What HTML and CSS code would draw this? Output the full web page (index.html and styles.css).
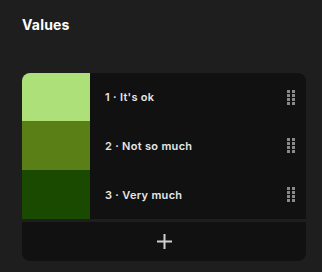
FILE: index.html
```html
<!DOCTYPE html>
<html lang="en">
<head>
    <meta charset="UTF-8">
    <title>Values</title>
    <link rel="stylesheet" href="styles.css">
</head>
<body>
    <h1 class="title">Values</h1>

    <div class="panel">
        <ul class="values">
            <li class="value">
                <span class="swatch swatch-1"></span>
                <span class="label">1 · It's ok</span>
                <svg class="handle" width="8" height="15" viewBox="0 0 8 15"><g fill="#8a8a8a"><rect x="0" y="0" width="3" height="3"/><rect x="5" y="0" width="3" height="3"/><rect x="0" y="4" width="3" height="3"/><rect x="5" y="4" width="3" height="3"/><rect x="0" y="8" width="3" height="3"/><rect x="5" y="8" width="3" height="3"/><rect x="0" y="12" width="3" height="3"/><rect x="5" y="12" width="3" height="3"/></g></svg>
            </li>
            <li class="value">
                <span class="swatch swatch-2"></span>
                <span class="label">2 · Not so much</span>
                <svg class="handle" width="8" height="15" viewBox="0 0 8 15"><g fill="#8a8a8a"><rect x="0" y="0" width="3" height="3"/><rect x="5" y="0" width="3" height="3"/><rect x="0" y="4" width="3" height="3"/><rect x="5" y="4" width="3" height="3"/><rect x="0" y="8" width="3" height="3"/><rect x="5" y="8" width="3" height="3"/><rect x="0" y="12" width="3" height="3"/><rect x="5" y="12" width="3" height="3"/></g></svg>
            </li>
            <li class="value">
                <span class="swatch swatch-3"></span>
                <span class="label">3 · Very much</span>
                <svg class="handle" width="8" height="15" viewBox="0 0 8 15"><g fill="#8a8a8a"><rect x="0" y="0" width="3" height="3"/><rect x="5" y="0" width="3" height="3"/><rect x="0" y="4" width="3" height="3"/><rect x="5" y="4" width="3" height="3"/><rect x="0" y="8" width="3" height="3"/><rect x="5" y="8" width="3" height="3"/><rect x="0" y="12" width="3" height="3"/><rect x="5" y="12" width="3" height="3"/></g></svg>
            </li>
        </ul>
        <button class="add" type="button">
            <svg width="15" height="15" viewBox="0 0 15 15"><path d="M7.5 0v15M0 7.5h15" stroke="#d0d0d0" stroke-width="2"/></svg>
        </button>
    </div>
</body>
</html>
```

FILE: styles.css
```css
body {
    margin: 0;
    padding: 17px 16px 0 22px;
    background-color: #1e1e1e;
    font-family: Inter, "Open Sans", sans-serif;
    color: #e8e8e8;
}
.title {
    margin: 0;
    font-size: 14px;
    font-weight: 700;
    line-height: 16px;
    letter-spacing: 0.2px;
    color: #ffffff;
}
.panel {
    margin-top: 40px;
    display: flex;
    flex-direction: column;
    gap: 3px;
    width: 284px;
}
.values {
    list-style: none;
    margin: 0;
    padding: 0;
    background-color: #111111;
    border-radius: 8px 8px 0 0;
    overflow: hidden;
}
.value {
    display: flex;
    align-items: center;
    height: 49px;
}
.value:first-child {
    height: 48px;
}
.swatch {
    width: 68px;
    align-self: stretch;
}
.swatch-1 { background-color: #aee07a; }
.swatch-2 { background-color: #5a7f16; }
.swatch-3 { background-color: #1a4a00; }
.label {
    flex: 1;
    padding-left: 15px;
    font-size: 11px;
    font-weight: 600;
    letter-spacing: 0.3px;
    color: #e6e6e6;
}
.handle {
    margin-right: 11px;
}
.add {
    display: flex;
    align-items: center;
    justify-content: center;
    height: 39px;
    padding: 0;
    border: none;
    background-color: #111111;
    border-radius: 0 0 8px 8px;
    cursor: pointer;
}
```
